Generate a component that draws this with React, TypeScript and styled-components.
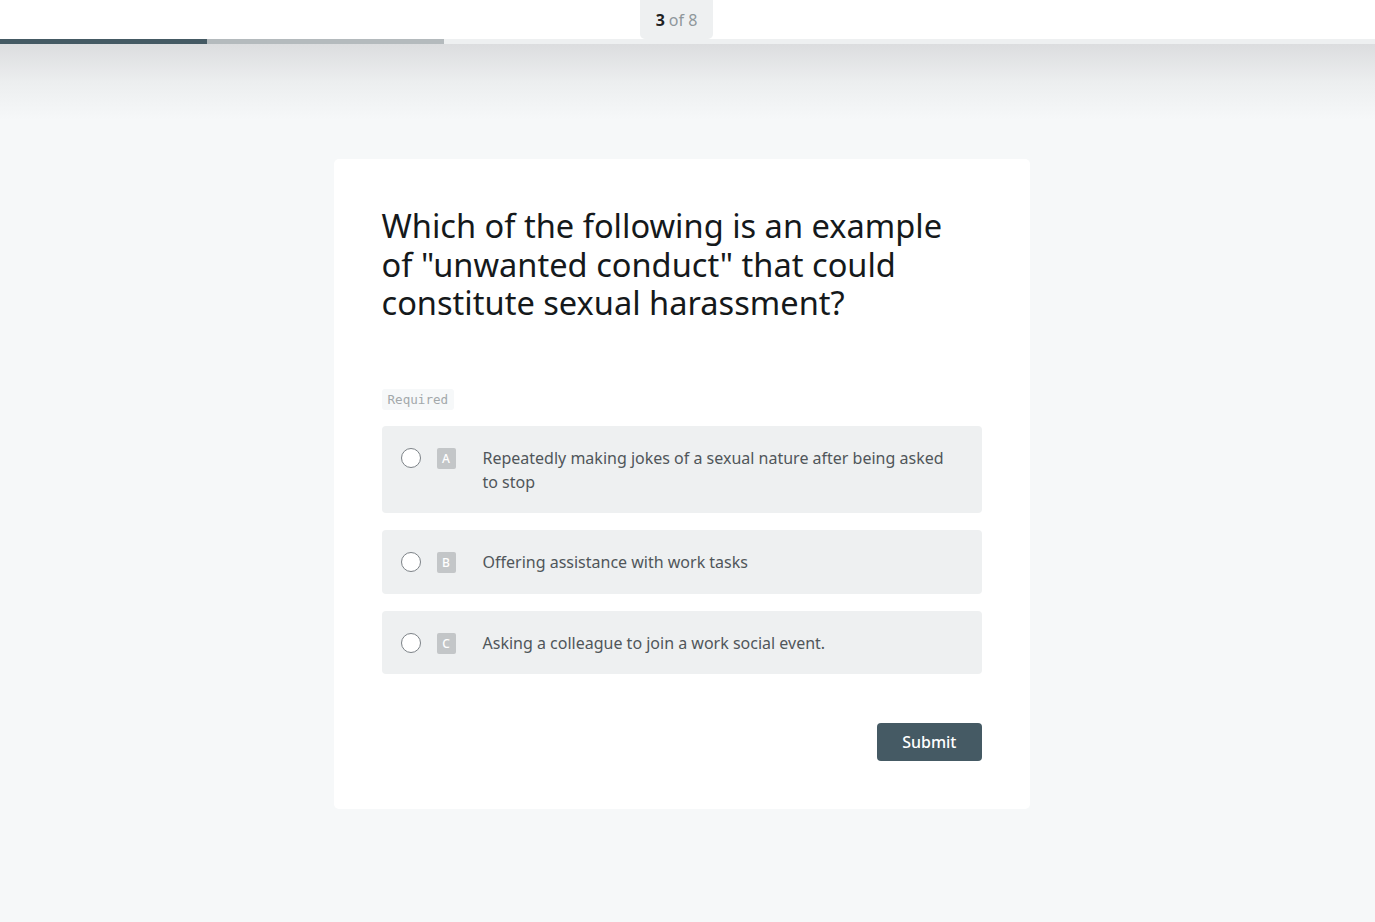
import React, { useState } from 'react';
import styled, { createGlobalStyle } from 'styled-components';

const GlobalStyle = createGlobalStyle`
  html, body {
    margin: 0;
    padding: 0;
    background: #f6f8f9;
    font-family: 'Noto Sans', 'Open Sans', sans-serif;
  }
  * { box-sizing: border-box; }
`;

const Page = styled.div`
  min-height: 922px;
  background: #f6f8f9;
  display: flex;
  flex-direction: column;
`;

const TopBar = styled.header`
  height: 39px;
  background: #ffffff;
  display: flex;
  justify-content: center;
  padding-right: 22px;
`;

const Counter = styled.div`
  height: 39px;
  padding: 0 16px;
  background: #eef0f1;
  border-radius: 0 0 5px 5px;
  display: flex;
  align-items: center;
  font-size: 16px;
  color: #8f979b;
  gap: 4px;

  b {
    color: #1f2224;
    font-weight: 700;
  }
`;

const Progress = styled.div`
  height: 5px;
  display: flex;
  background: #eef0f1;
`;

const Segment = styled.div<{ $color: string }>`
  height: 100%;
  background: ${(p) => p.$color};
`;

const Shade = styled.div`
  height: 76px;
  background: linear-gradient(to bottom, #dcdddf 0%, #eceeef 50%, #f6f8f9 100%);
`;

const Main = styled.main`
  display: flex;
  justify-content: center;
  padding: 39px 12px 0 0;
`;

const Card = styled.section`
  width: 696px;
  background: #ffffff;
  border-radius: 5px;
  padding: 48px;
  display: flex;
  flex-direction: column;
`;

const Question = styled.h1`
  margin: 0;
  font-size: 32.6px;
  line-height: 38.5px;
  font-weight: 400;
  color: #15191b;
  max-width: 585px;
`;

const Required = styled.span`
  align-self: flex-start;
  margin-top: 66px;
  padding: 0 6px;
  height: 21px;
  line-height: 21px;
  background: #f6f8f9;
  border-radius: 3px;
  font-family: 'DejaVu Sans Mono', 'Liberation Mono', monospace;
  font-size: 12.6px;
  color: #a3a8ab;
`;

const Options = styled.div`
  margin-top: 16px;
  display: flex;
  flex-direction: column;
  gap: 17px;
`;

const Option = styled.label<{ $checked: boolean }>`
  display: flex;
  align-items: flex-start;
  padding: 20px 20px 19.5px 19px;
  background: ${(p) => (p.$checked ? '#e3e7e9' : '#eef0f1')};
  border-radius: 4px;
  cursor: pointer;
`;

const Radio = styled.span<{ $checked: boolean }>`
  flex: none;
  width: 20px;
  height: 20px;
  margin-top: 2px;
  border-radius: 50%;
  border: 1.5px solid #7c8287;
  background: #ffffff;
  box-shadow: ${(p) => (p.$checked ? 'inset 0 0 0 4px #ffffff, inset 0 0 0 10px #455a64' : 'none')};
`;

const Letter = styled.span`
  flex: none;
  width: 19px;
  height: 21px;
  margin: 2px 0 0 16px;
  background: #c3c6c8;
  border-radius: 2px;
  color: #ffffff;
  font-size: 12px;
  font-weight: 500;
  display: flex;
  align-items: center;
  justify-content: center;
`;

const OptionText = styled.span`
  margin-left: 27px;
  font-size: 16px;
  line-height: 24px;
  color: #50565a;
`;

const Footer = styled.div`
  margin-top: 48.5px;
  display: flex;
  justify-content: flex-end;
`;

const SubmitButton = styled.button`
  height: 38px;
  padding: 0 25px;
  border: none;
  border-radius: 4px;
  background: #455a64;
  color: #ffffff;
  font-family: inherit;
  font-size: 16px;
  font-weight: 500;
  cursor: pointer;
`;

const options = [
  { key: 'A', text: 'Repeatedly making jokes of a sexual nature after being asked to stop' },
  { key: 'B', text: 'Offering assistance with work tasks' },
  { key: 'C', text: 'Asking a colleague to join a work social event.' },
];

export default function App() {
  const [selected, setSelected] = useState<string | null>(null);

  return (
    <>
      <GlobalStyle />
      <Page>
        <TopBar>
          <Counter>
            <b>3</b> of 8
          </Counter>
        </TopBar>
        <Progress>
          <Segment $color="#455a64" style={{ width: 207 }} />
          <Segment $color="#b4babd" style={{ width: 237 }} />
        </Progress>
        <Shade />
        <Main>
          <Card>
            <Question>
              Which of the following is an example of "unwanted conduct" that could constitute sexual harassment?
            </Question>
            <Required>Required</Required>
            <Options>
              {options.map((o) => (
                <Option key={o.key} $checked={selected === o.key} onClick={() => setSelected(o.key)}>
                  <Radio $checked={selected === o.key} />
                  <Letter>{o.key}</Letter>
                  <OptionText>{o.text}</OptionText>
                </Option>
              ))}
            </Options>
            <Footer>
              <SubmitButton>Submit</SubmitButton>
            </Footer>
          </Card>
        </Main>
      </Page>
    </>
  );
}
